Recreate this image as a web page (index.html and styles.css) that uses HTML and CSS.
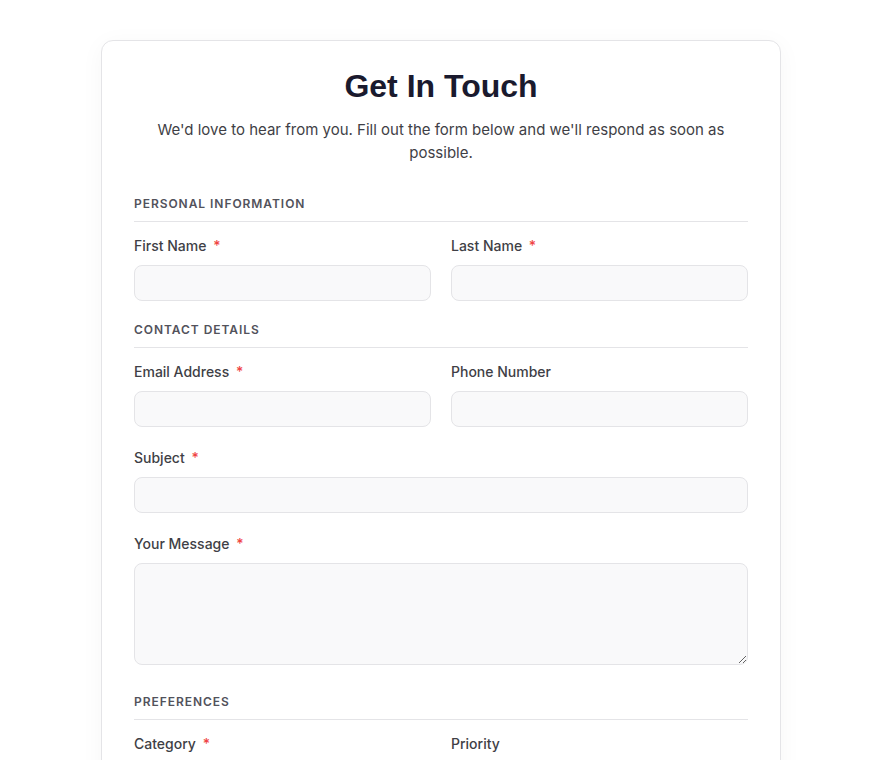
FILE: index.html
```html
<!DOCTYPE html>
<html lang="en">
<head>
<meta charset="utf-8">
<title>Get In Touch</title>
<link rel="stylesheet" href="styles.css">
</head>
<body>
<div class="page">
  <form class="card">
    <h1 class="title">Get In Touch</h1>
    <p class="subtitle">We'd love to hear from you. Fill out the form below and we'll respond as soon as possible.</p>

    <div class="section">
      <h2 class="section-title">Personal Information</h2>
      <div class="row two">
        <div class="field">
          <label class="label">First Name <span class="req">*</span></label>
          <input class="input" type="text">
        </div>
        <div class="field">
          <label class="label">Last Name <span class="req">*</span></label>
          <input class="input" type="text">
        </div>
      </div>
    </div>

    <div class="section">
      <h2 class="section-title">Contact Details</h2>
      <div class="row two">
        <div class="field">
          <label class="label">Email Address <span class="req">*</span></label>
          <input class="input" type="email">
        </div>
        <div class="field">
          <label class="label">Phone Number</label>
          <input class="input" type="tel">
        </div>
      </div>
      <div class="row">
        <div class="field">
          <label class="label">Subject <span class="req">*</span></label>
          <input class="input" type="text">
        </div>
      </div>
      <div class="row">
        <div class="field">
          <label class="label">Your Message <span class="req">*</span></label>
          <textarea class="input textarea"></textarea>
        </div>
      </div>
    </div>

    <div class="section section-wide">
      <h2 class="section-title">Preferences</h2>
      <div class="row two">
        <div class="field">
          <label class="label">Category <span class="req">*</span></label>
          <select class="input"><option></option></select>
        </div>
        <div class="field">
          <label class="label">Priority</label>
          <select class="input"><option></option></select>
        </div>
      </div>
    </div>
  </form>
</div>
</body>
</html>
```
FILE: styles.css
```css
* { box-sizing: border-box; }
html, body { margin: 0; padding: 0; background: #ffffff; }
body {
  font-family: Inter, "Noto Sans", "Liberation Sans", sans-serif;
  color: #27272a;
}
.page {
  padding: 40px 16px;
}
.card {
  max-width: 680px;
  margin: 0 auto;
  background: #fff;
  border: 1px solid #e4e4e7;
  border-radius: 12px;
  padding: 25px 32px 32px;
  box-shadow: 0 4px 24px rgba(0, 0, 0, 0.04);
}
.title {
  margin: 0;
  text-align: center;
  font-family: "Liberation Sans", Arial, sans-serif;
  font-size: 32px;
  line-height: 40px;
  font-weight: 700;
  color: #1a1a2e;
}
.subtitle {
  margin: 12px 0 0;
  text-align: center;
  font-size: 15px;
  line-height: 23px;
  color: #3f3f46;
}
.section { margin-top: 32px; }
.section + .section { margin-top: 21px; }
.section.section-wide { margin-top: 29px; }
.section-title {
  margin: 0 0 14px;
  padding-bottom: 9px;
  border-bottom: 1px solid #e4e4e7;
  font-size: 12px;
  line-height: 16px;
  font-weight: 600;
  letter-spacing: 0.95px;
  text-transform: uppercase;
  color: #52525b;
}
.row { display: grid; grid-template-columns: 1fr; gap: 20px; }
.row.two { grid-template-columns: 1fr 1fr; }
.row + .row { margin-top: 21px; }
.field { display: flex; flex-direction: column; }
.label {
  font-size: 14px;
  line-height: 20px;
  font-weight: 500;
  color: #3f3f46;
  margin-bottom: 9px;
}
.req { color: #ef4444; margin-left: 3px; }
.input {
  display: block;
  width: 100%;
  height: 36px;
  background: #f9f9fa;
  border: 1px solid #e4e4e7;
  border-radius: 8px;
  font: inherit;
  font-size: 14px;
  padding: 0 12px;
  color: #18181b;
  appearance: none;
}
.textarea {
  height: 102px;
  resize: vertical;
  padding: 10px 12px;
}
```
